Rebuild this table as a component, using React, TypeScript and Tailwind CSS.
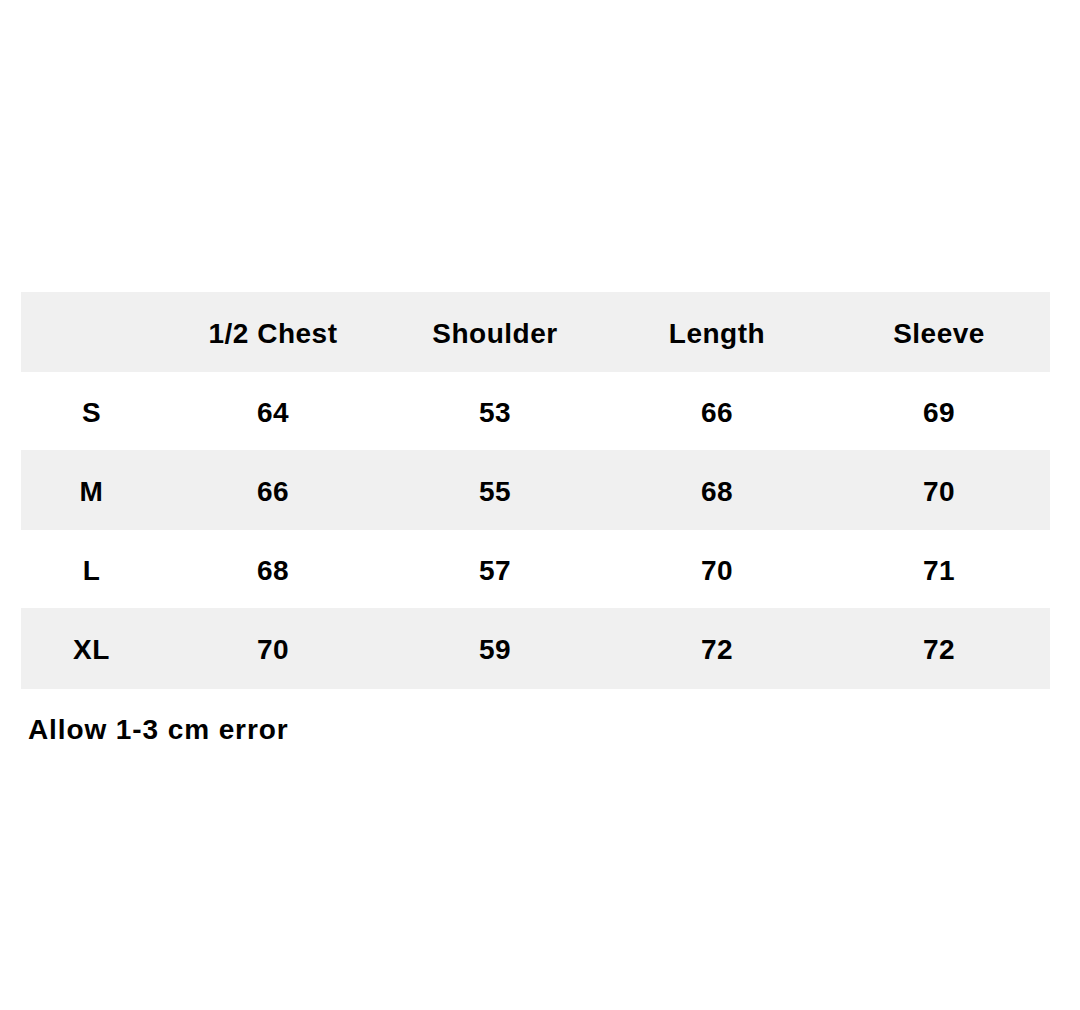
const headers = ["", "1/2 Chest", "Shoulder", "Length", "Sleeve"];

const rows = [
  { size: "S", values: ["64", "53", "66", "69"], h: "h-[78px]" },
  { size: "M", values: ["66", "55", "68", "70"], h: "h-[80px]" },
  { size: "L", values: ["68", "57", "70", "71"], h: "h-[78px]" },
  { size: "XL", values: ["70", "59", "72", "72"], h: "h-[81px]" },
];

export default function App() {
  return (
    <div
      className="w-[1080px] h-[1010px] bg-white text-black"
      style={{ fontFamily: '"Liberation Sans", Arial, sans-serif' }}
    >
      <div className="pt-[292px] pl-[21px] w-[1050px]">
        <div className="flex flex-col text-[28px] font-bold leading-none tracking-[0.5px]">
          <div className="grid grid-cols-[141px_222px_222px_222px_222px] h-[80px] items-center pt-[3px] bg-[#f0f0f0]">
            {headers.map((h, i) => (
              <div key={i} className="text-center">
                {h}
              </div>
            ))}
          </div>
          {rows.map((row, i) => (
            <div
              key={row.size}
              className={`grid grid-cols-[141px_222px_222px_222px_222px] items-center pt-[3px] ${row.h} ${
                i % 2 === 1 ? "bg-[#f0f0f0]" : "bg-white"
              }`}
            >
              <div className="text-center">{row.size}</div>
              {row.values.map((v, j) => (
                <div key={j} className="text-center">
                  {v}
                </div>
              ))}
            </div>
          ))}
        </div>
        <p className="mt-[27px] pl-[7px] text-[28px] font-bold leading-none tracking-[0.9px]">
          Allow 1-3 cm error
        </p>
      </div>
    </div>
  );
}
